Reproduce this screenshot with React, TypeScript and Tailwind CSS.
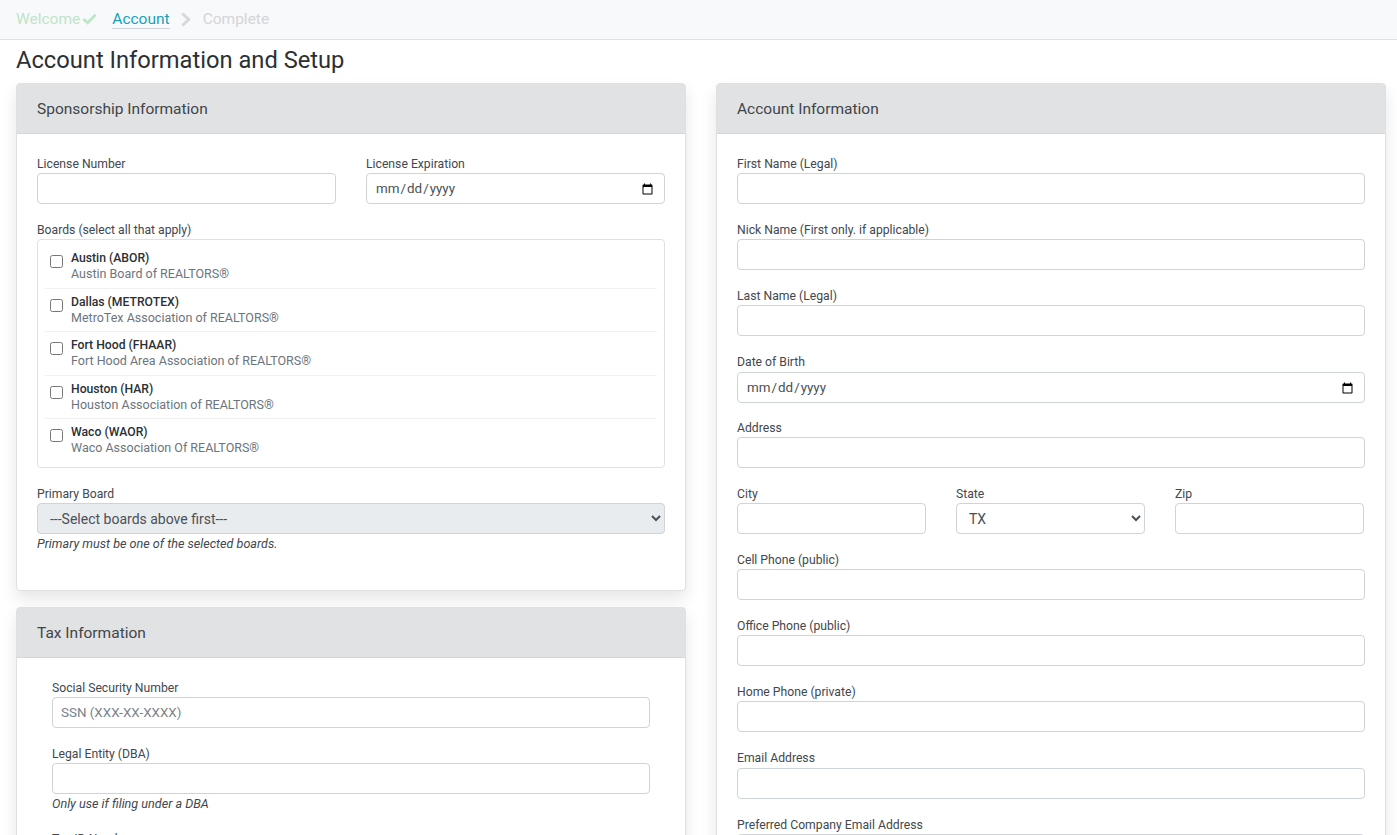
const boards = [
  { short: 'Austin (ABOR)', name: 'Austin Board of REALTORS®' },
  { short: 'Dallas (METROTEX)', name: 'MetroTex Association of REALTORS®' },
  { short: 'Fort Hood (FHAAR)', name: 'Fort Hood Area Association of REALTORS®' },
  { short: 'Houston (HAR)', name: 'Houston Association of REALTORS®' },
  { short: 'Waco (WAOR)', name: 'Waco Association Of REALTORS®' },
]

const inputClass =
  'block h-[31px] w-full rounded-[4px] border border-[#ced4da] bg-white px-2 text-[13.4px] text-[#495057] placeholder:text-[#7b838a] outline-none [&[type=date]]:pt-[2px]'
const labelClass = 'mb-px block h-[18px] text-[12.2px] leading-[20px] text-[#42484e]'

function Field({
  label,
  type = 'text',
  placeholder,
  note,
  nudge,
}: {
  label: string
  type?: string
  placeholder?: string
  note?: string
  nudge?: boolean
}) {
  return (
    <div className={nudge ? 'mb-[15px] min-w-0 [&>label]:mb-[2px]' : 'mb-4 min-w-0'}>
      <label className={labelClass}>{label}</label>
      <input type={type} placeholder={placeholder} className={inputClass} />
      {note && <p className="mt-px text-[12.6px] leading-[18px] italic text-[#42484e]">{note}</p>}
    </div>
  )
}

function Card({ title, children }: { title: string; children: React.ReactNode }) {
  return (
    <div className="rounded-[4px] border border-[#dfe0e2] bg-white shadow-[0_8px_16px_rgba(0,0,0,0.1)]">
      <div className="flex h-[50px] items-center border-b border-[#d5d6d8] bg-[#e1e2e4] px-5 pt-[2px] text-[15.5px] text-[#3f4549]">
        {title}
      </div>
      {children}
    </div>
  )
}

export default function App() {
  return (
    <div className="h-[835px] overflow-hidden bg-white [font-family:Roboto,sans-serif]">
      <nav className="flex h-10 items-center border-b border-[#dee2e6] bg-[#f8f9fa] pl-4 text-[15.5px]">
        <span className="text-[#bde5c8]">Welcome</span>
        <svg viewBox="0 0 16 12" className="mb-[2px] ml-[2px] h-[12px] w-[15px]" fill="none" stroke="#bde5c8" strokeWidth="3">
          <path d="M1.5 6 L6 10 L14.5 1.5" />
        </svg>
        <span className="ml-[15px] border-b border-[#ced4da] leading-[18px] text-[#17a2b8]">Account</span>
        <svg viewBox="0 0 12 16" className="ml-[10px] h-[15px] w-[12px]" fill="none" stroke="#d6d8da" strokeWidth="3">
          <path d="M2 1.5 L9 8 L2 14.5" />
        </svg>
        <span className="ml-[11px] text-[#d3d5d7]">Complete</span>
      </nav>

      <h1 className="mt-[3px] pl-4 text-[23.7px] leading-[34px] font-normal text-[#2b3035]">
        Account Information and Setup
      </h1>

      <div className="mt-[6px] grid grid-cols-[670px_670px] gap-x-[30px] pl-4">
        <div className="flex flex-col gap-4">
          <Card title="Sponsorship Information">
            <div className="px-5 pt-[20px] pb-[37px]">
              <div className="grid grid-cols-2 gap-x-[30px]">
                <Field label="License Number" />
                <Field label="License Expiration" type="date" />
              </div>
              <label className={labelClass}>Boards (select all that apply)</label>
              <div className="mb-4 h-[229px] rounded-[4px] border border-[#dee2e6] px-[7px] pt-[5px]">
                {boards.map((b) => (
                  <div key={b.short} className="flex h-[43.6px] border-b border-[#f0f1f2] pt-[5px] last:border-b-0">
                    <input type="checkbox" className="mt-[5px] ml-[5px] h-[13px] w-[13px]" />
                    <div className="ml-[8px] leading-4">
                      <p className="text-[12.2px] font-medium text-[#2b3035]">{b.short}</p>
                      <p className="text-[12.5px] text-[#6c757d]">{b.name}</p>
                    </div>
                  </div>
                ))}
              </div>
              <label className={labelClass}>Primary Board</label>
              <select
                disabled
                className="block h-[31px] w-full rounded-[4px] border border-[#ced4da] bg-[#e9ecef] px-2 text-sm text-[#495057]"
              >
                <option>---Select boards above first---</option>
              </select>
              <p className="mt-px text-[12.6px] leading-[18px] italic text-[#42484e]">
                Primary must be one of the selected boards.
              </p>
            </div>
          </Card>

          <Card title="Tax Information">
            <div className="px-[35px] pt-[20px] pb-5">
              <Field label="Social Security Number" placeholder="SSN (XXX-XX-XXXX)" />
              <Field label="Legal Entity (DBA)" note="Only use if filing under a DBA" />
              <Field label="Tax ID Number" />
            </div>
          </Card>
        </div>

        <Card title="Account Information">
          <div className="px-5 pt-[20px] pb-5">
            <Field label="First Name (Legal)" />
            <Field label="Nick Name (First only. if applicable)" />
            <Field label="Last Name (Legal)" />
            <Field label="Date of Birth" type="date" nudge />
            <Field label="Address" />
            <div className="grid grid-cols-[189px_189px_189px] gap-x-[30px]">
              <Field label="City" />
              <div className="mb-4 min-w-0">
                <label className={labelClass}>State</label>
                <select className="block h-[31px] w-full rounded-[4px] border border-[#ced4da] bg-white px-2 text-sm text-[#495057]">
                  <option>TX</option>
                </select>
              </div>
              <Field label="Zip" />
            </div>
            <Field label="Cell Phone (public)" />
            <Field label="Office Phone (public)" />
            <Field label="Home Phone (private)" />
            <div className="pb-px">
              <Field label="Email Address" nudge />
            </div>
            <Field label="Preferred Company Email Address" />
          </div>
        </Card>
      </div>
    </div>
  )
}
